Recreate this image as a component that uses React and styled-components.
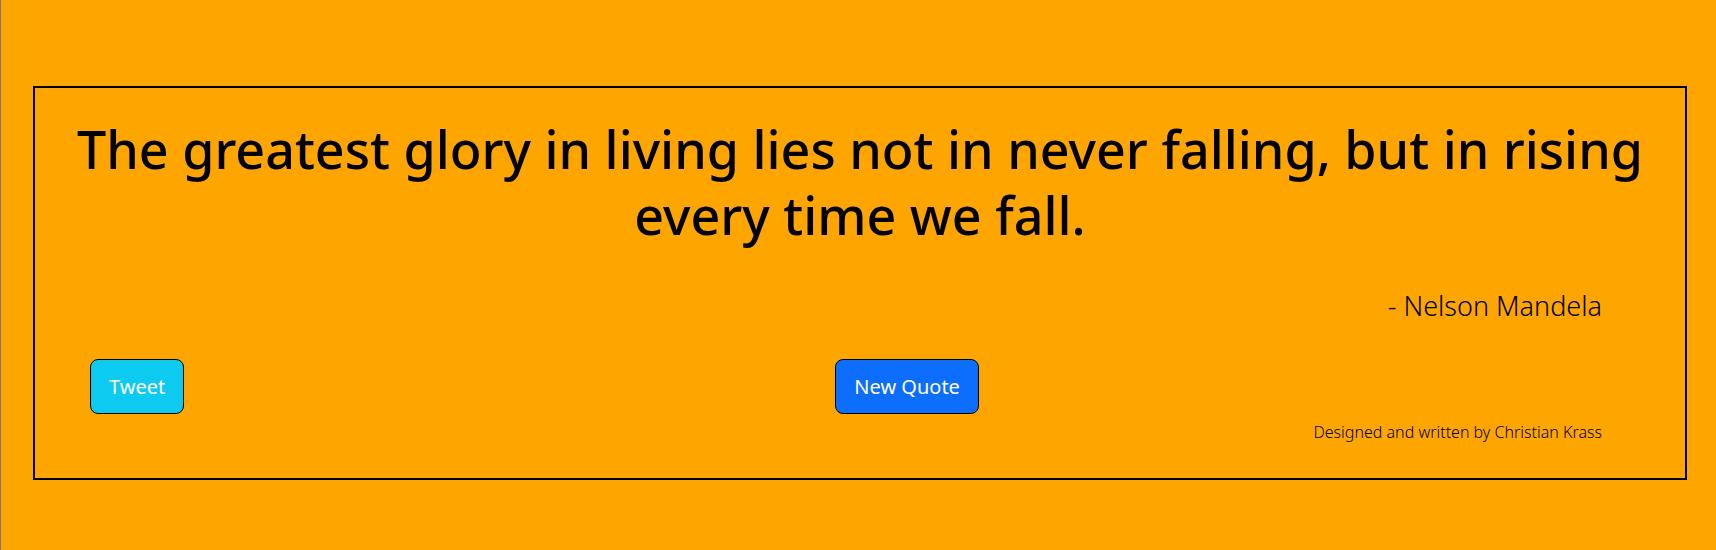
import React from "react";
import styled, { createGlobalStyle } from "styled-components";

const GlobalStyle = createGlobalStyle`
  *, *::before, *::after { box-sizing: border-box; }
  body {
    margin: 0;
    background: #ffa500;
    color: #000;
    font-family: "Segoe UI", "Noto Sans", "Open Sans", sans-serif;
    font-size: 16px;
    line-height: 24px;
  }
`;

const Page = styled.main`
  min-height: 100vh;
  padding: 86px 29px 70px 32px;
  border-left: 1px solid #7a7a7a;
`;

const QuoteBox = styled.section`
  border: 2px solid #000;
  padding: 28px 24px 34px;
`;

const Quote = styled.h1`
  margin: 0;
  text-align: center;
  font-size: 52px;
  line-height: 66px;
  font-weight: 500;
`;

const Author = styled.p`
  margin: 38px 59px 0 0;
  text-align: right;
  font-size: 27px;
  font-weight: 300;
  line-height: 40px;
`;

const Actions = styled.div`
  display: flex;
  justify-content: space-between;
  align-items: center;
  margin: 33px 0 0;
  padding: 0 31px;

  &::after {
    content: "";
  }
`;

const Button = styled.button`
  padding: 12px 18px;
  border: 1px solid #000;
  border-radius: 8px;
  background: ${(p) => p.$color};
  color: #fff;
  font: inherit;
  font-size: 20px;
  line-height: 29px;
  cursor: pointer;
`;

const Credit = styled.p`
  margin: 6px 59px 0 0;
  text-align: right;
  font-weight: 300;
`;

export default function App() {
  return (
    <>
      <GlobalStyle />
      <Page>
        <QuoteBox>
          <Quote>
            The greatest glory in living lies not in never falling, but in rising every time we fall.
          </Quote>
          <Author>- Nelson Mandela</Author>
          <Actions>
            <Button type="button" $color="#0dcaf0">Tweet</Button>
            <Button type="button" $color="#0d6efd">New Quote</Button>
          </Actions>
          <Credit>Designed and written by Christian Krass</Credit>
        </QuoteBox>
      </Page>
    </>
  );
}
